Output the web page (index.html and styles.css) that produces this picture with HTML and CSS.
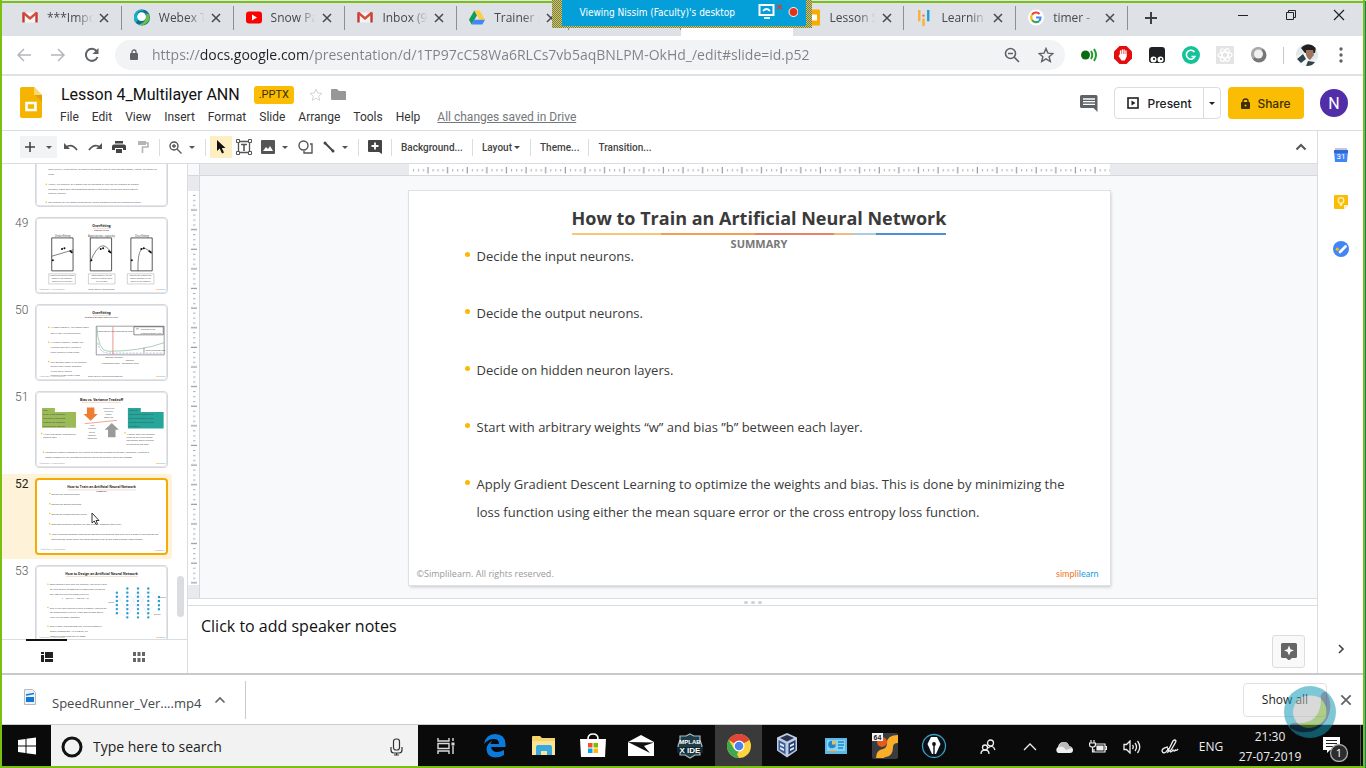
FILE: index.html
```html
<!DOCTYPE html>
<html lang="en">
<head>
<meta charset="utf-8">
<meta name="viewport" content="width=device-width, initial-scale=1">
<title>Lesson 4_Multilayer ANN</title>
<link rel="stylesheet" href="styles.css">
</head>
<body>
<svg class="defs" aria-hidden="true">
  <defs>
    <symbol id="x" viewBox="0 0 12 12"><path d="M2 2l8 8M10 2l-8 8" fill="none" stroke="currentColor" stroke-width="1.5"/></symbol>
    <symbol id="gmail" viewBox="0 0 16 12"><path d="M1 1h14v10H1z" fill="#f4f4f4"/><path d="M1.500 1v10M14.500 1v10" stroke="#c5392f" stroke-width="2.4"/><path d="M1 1l7 6 7-6" fill="none" stroke="#d54b3d" stroke-width="2.4"/></symbol>
    <symbol id="caret" viewBox="0 0 8 5"><path d="M1 1h6L4 4z" fill="currentColor"/></symbol>
    <symbol id="up" viewBox="0 0 12 8"><path d="M1.500 6.500L6 2l4.500 4.500" fill="none" stroke="currentColor" stroke-width="2"/></symbol>
    <pattern id="ticks-h" width="19.620" height="12" patternUnits="userSpaceOnUse"><path d="M4.500 5v2.500M9.500 5v2.500M14.500 5v2.500" stroke="#a9adb3"/><path d="M19 3v6.500" stroke="#9599a0" stroke-width="1.200"/></pattern>
    <pattern id="ticks-v" width="12" height="19.620" patternUnits="userSpaceOnUse"><path d="M5 4.500h2.500M5 9.500h2.500M5 14.500h2.500" stroke="#a9adb3"/><path d="M3 19h6" stroke="#9599a0" stroke-width="1.200"/></pattern>
    <g id="slide-foot"><text class="tf" x="18" y="384">©Simplilearn. All rights reserved.</text><text class="tl" x="640" y="386" fill="#ee7623">simpl</text><text class="tl" x="664" y="386" fill="#1b9dd9">learn</text></g>
  </defs>
</svg>

<div class="screen">
  <header class="tabstrip">
    <nav class="tabs" aria-label="Tabs">
      <div class="tab"><svg class="fav" viewBox="0 0 16 12"><use href="#gmail"/></svg><span>***Impo</span><button aria-label="Close tab"><svg><use href="#x"/></svg></button></div>
      <div class="tab"><svg class="fav" viewBox="0 0 18 18"><circle cx="9" cy="9" r="9" fill="#0b6f8f"/><path d="M9 0a9 9 0 0 0-7 15L5 11a5 5 0 0 1 7-8z" fill="#16b0c8"/><path d="M17 6a9 9 0 0 1-12 11c6-1 9-6 9-13z" fill="#6abf4b"/><circle cx="8.500" cy="8" r="5" fill="#fff"/></svg><span>Webex T</span><button aria-label="Close tab"><svg><use href="#x"/></svg></button></div>
      <div class="tab"><svg class="fav" viewBox="0 0 16 12"><rect width="16" height="12" rx="3" fill="#f00"/><path d="M6 3l5 3-5 3z" fill="#fff"/></svg><span>Snow Pa</span><button aria-label="Close tab"><svg><use href="#x"/></svg></button></div>
      <div class="tab"><svg class="fav" viewBox="0 0 16 12"><use href="#gmail"/></svg><span>Inbox (9</span><button aria-label="Close tab"><svg><use href="#x"/></svg></button></div>
      <div class="tab"><svg class="fav" viewBox="0 0 18 16"><path d="M6 0L0 10.500 3 16l6-10.500z" fill="#0f9d58"/><path d="M6 0h6l6 10.500h-6z" fill="#ffcd40"/><path d="M3 16h12l3-5.500H6z" fill="#4285f4"/></svg><span>Trainer I</span><button aria-label="Close tab"><svg><use href="#x"/></svg></button></div>
      <div class="tab"></div>
      <div class="tab active"></div>
      <div class="tab"><svg class="fav" viewBox="0 0 16 16"><rect x="1" width="14" height="16" rx="1" fill="#f9ab00"/><path d="M4 5h8v6H4z" fill="#fff"/></svg><span>Lesson S</span><button aria-label="Close tab"><svg><use href="#x"/></svg></button></div>
      <div class="tab"><svg class="fav" viewBox="0 0 16 18"><path d="M3 1v12M7.500 10v8" stroke="#fbb034" stroke-width="2.500"/><path d="M7.500 6v2" stroke="#ee7623" stroke-width="2.500"/><path d="M12.500 1v12" stroke="#1b9dd9" stroke-width="2.500"/></svg><span>Learnin</span><button aria-label="Close tab"><svg><use href="#x"/></svg></button></div>
      <div class="tab"><svg class="fav" viewBox="0 0 18 18"><circle cx="9" cy="9" r="9" fill="#fff"/><g fill="none" stroke-width="2.400"><path d="M13 5a5.500 5.500 0 0 0-8.500.8" stroke="#ea4335"/><path d="M4.500 5.800a5.500 5.500 0 0 0 0 6" stroke="#fbbc05"/><path d="M4.500 11.800a5.500 5.500 0 0 0 8 1.200" stroke="#34a853"/><path d="M12.500 13A5.500 5.500 0 0 0 14 9H9" stroke="#4285f4"/></g></svg><span>timer -</span><button aria-label="Close tab"><svg><use href="#x"/></svg></button></div>
    </nav>
    <button class="newtab" aria-label="New tab"><svg width="14" height="14"><path d="M7 1v12M1 7h12" stroke="#3c4043" stroke-width="2"/></svg></button>
    <div class="wincontrols">
      <button aria-label="Minimize"><svg width="12" height="12"><path d="M1 6.500h10" stroke="#222"/></svg></button>
      <button aria-label="Restore"><svg width="12" height="12"><path d="M1.500 3.500h7v7h-7zM3.500 3.500v-2h7v7h-2" fill="none" stroke="#222"/></svg></button>
      <button aria-label="Close"><svg width="12" height="12"><path d="M1 1l10 10M11 1L1 11" stroke="#222" stroke-width="1.200"/></svg></button>
    </div>
  </header>

  <div class="addressbar">
    <button class="ab" aria-label="Back"><svg width="16" height="14"><path d="M15 7H2M8 1L2 7l6 6" fill="none" stroke="#b4b7bb" stroke-width="1.500"/></svg></button>
    <button class="ab" aria-label="Forward"><svg width="16" height="14"><path d="M1 7h13M8 1l6 6-6 6" fill="none" stroke="#b4b7bb" stroke-width="1.500"/></svg></button>
    <button class="ab" aria-label="Reload"><svg width="16" height="16"><path d="M13.500 10A6 6 0 1 1 12.500 4" fill="none" stroke="#5f6368" stroke-width="2"/><path d="M14.500 1v6h-6z" fill="#5f6368"/></svg></button>
    <div class="omnibox">
      <svg width="10" height="14"><rect y="5" x="1" width="8" height="7" rx="1" fill="#5f6368"/><path d="M3 6V4a2 2 0 0 1 4 0v2" fill="none" stroke="#5f6368" stroke-width="1.300"/></svg>
      <input class="url" aria-label="Address" value="https://docs.google.com/presentation/d/1TP97cC58Wa6RLCs7vb5aqBNLPM-OkHd_/edit#slide=id.p52">
      <button class="ab" aria-label="Zoom out"><svg width="16" height="16"><circle cx="6.500" cy="6.500" r="5" fill="none" stroke="#5f6368" stroke-width="1.600"/><path d="M10 10l5 5M4 6.500h5" stroke="#5f6368" stroke-width="1.600"/></svg></button>
      <button class="ab" aria-label="Bookmark"><svg width="16" height="16"><path d="M8 1.500l1.900 4.600 5 .4-3.800 3.200 1.200 4.800L8 11.900l-4.300 2.600 1.200-4.800L1.100 6.500l5-.4z" fill="none" stroke="#5f6368" stroke-width="1.400"/></svg></button>
    </div>
    <button class="ab first-ext" aria-label="Sound extension"><svg width="18" height="16"><circle cx="5.500" cy="8" r="4.500" fill="#0b6b14"/><path d="M11 4q2.500 4 0 8M14 2q4 6 0 12" fill="none" stroke="#1e9b2b" stroke-width="2"/></svg></button>
    <button class="ab" aria-label="Ad blocker"><svg width="18" height="18"><path d="M5.500 0h7L18 5.500v7L12.500 18h-7L0 12.500v-7z" fill="#e40d0d"/><path d="M6.500 9V5M8.300 8V3.800M10.100 8V3.800M12 9V5" stroke="#fff" stroke-width="1.300" stroke-linecap="round"/><path d="M5.900 8h6.700v3l-1.800 3.500H7.500L4.500 10l.8-.7z" fill="#fff"/></svg></button>
    <button class="ab" aria-label="Panda extension"><svg width="16" height="17"><rect width="16" height="16" rx="3" fill="#202124"/><circle cx="4.500" cy="12.500" r="3" fill="#fff"/><circle cx="11.500" cy="12.500" r="3" fill="#fff"/><circle cx="5" cy="12" r="1"/><circle cx="12" cy="12" r="1"/></svg></button>
    <button class="ab" aria-label="Grammar extension"><svg width="18" height="18"><circle cx="9" cy="9" r="9" fill="#15c39a"/><path d="M12.500 6A4.500 4.500 0 1 0 13 10.500H9.500" fill="none" stroke="#fff" stroke-width="1.600"/></svg></button>
    <button class="ab" aria-label="React extension"><svg width="18" height="18"><path d="M0 0h18v18H0z" fill="#e4e4e4"/><g fill="none" stroke="#fff" stroke-width="1.200"><ellipse cx="9" cy="9" rx="7" ry="2.800"/><ellipse cx="9" cy="9" rx="7" ry="2.800" transform="rotate(60 9 9)"/><ellipse cx="9" cy="9" rx="7" ry="2.800" transform="rotate(120 9 9)"/></g></svg></button>
    <button class="ab" aria-label="Webex extension"><svg width="16" height="16"><circle cx="8" cy="8" r="7.500" fill="#777"/><path d="M2 12A7 7 0 0 1 12 2L9 5 4 10z" fill="#aaa"/><circle cx="7.500" cy="7" r="4.500" fill="#f1f1f1"/></svg></button>
    <span class="absep"></span>
    <button class="ab" aria-label="Profile"><svg width="22" height="22"><clipPath id="pc"><circle cx="11" cy="11" r="11"/></clipPath><g clip-path="url(#pc)"><path d="M0 0h22v22H0z" fill="#dfe8ea"/><path d="M5 4Q12-3 20 3l-1 6H9z" fill="#22201f"/><path d="M10 6h7l1 5-4 5-4-3z" fill="#a07361"/><path d="M0 12l9-3 4 8 7-2v7H3z" fill="#f4f6f7"/><path d="M1 15l6-5 3 5-5 4zM12 17l7 1-3 4h-6z" fill="#31444c"/></g></svg></button>
    <button class="ab" aria-label="Menu"><svg width="4" height="16" fill="#5f6368"><circle cx="2" cy="2" r="1.700"/><circle cx="2" cy="8" r="1.700"/><circle cx="2" cy="14" r="1.700"/></svg></button>
  </div>

  <header class="doc">
    <svg class="doclogo" width="22" height="32"><path d="M2 0h12l8 8v22a2 2 0 0 1-2 1H2a2 2 0 0 1-2-2V2a2 2 0 0 1 2-2z" fill="#f4b400"/><path d="M14 0l8 8h-8z" fill="#f9d775"/><path d="M22 8v7l-7-7z" fill="#dea203"/><path d="M6.500 16h9v7h-9z" fill="none" stroke="#fff" stroke-width="2.600"/></svg>
    <div class="docmain">
      <div class="titlerow">
        <h1>Lesson 4_Multilayer ANN</h1><span class="badge">.PPTX</span>
        <button aria-label="Star"><svg width="14" height="14"><path d="M7 1l1.700 4 4.300.4-3.300 2.800 1 4.200L7 10.200l-3.700 2.200 1-4.200L1 5.400 5.300 5z" fill="none" stroke="#d3d5d8"/></svg></button>
        <button aria-label="Move"><svg width="15" height="13"><path d="M1 1h5l2 2h6q1 0 1 1v8H1q-1 0-1-1V2q0-1 1-1z" fill="#959799"/></svg></button>
      </div>
      <nav class="menu">
        <button>File</button><button>Edit</button><button>View</button><button>Insert</button><button>Format</button><button>Slide</button><button>Arrange</button><button>Tools</button><button>Help</button>
        <a href="#">All changes saved in Drive</a>
      </nav>
    </div>
    <button class="comment" aria-label="Comments"><svg width="18" height="17"><path d="M1.500 0h14.500q1.500 0 1.500 1.500V17l-4-4H1.500Q0 13 0 11.500v-10Q0 0 1.500 0z" fill="#5f6368"/><path d="M3 4h12M3 6.700h12M3 9.400h12" stroke="#fff" stroke-width="1.300"/></svg></button>
    <div class="present">
      <button><svg width="12" height="12"><rect x="1" y="1" width="10" height="10" fill="none" stroke="#202124" stroke-width="1.600"/><path d="M4.500 3.500L8.500 6l-4 2.500z" fill="#202124"/></svg>Present</button>
      <button aria-label="Present options"><svg width="8" height="5"><use href="#caret"/></svg></button>
    </div>
    <button class="share"><svg width="9" height="11"><rect y="4" width="9" height="7" rx="1" fill="#3c2f00"/><path d="M2 5V3a2.500 2 0 0 1 5 0v2" fill="none" stroke="#3c2f00" stroke-width="1.400"/><circle cx="4.500" cy="7.500" r="1" fill="#fbbc04"/></svg>Share</button>
    <button class="avatar">N</button>
  </header>

  <div class="work">
    <div class="left">
      <div class="toolbar">
        <button class="tb add" aria-label="New slide"><svg width="10" height="10"><path d="M5 0v10M0 5h10" stroke="#444" stroke-width="1.600"/></svg><svg width="8" height="5"><use href="#caret"/></svg></button>
        <button class="tb" aria-label="Undo"><svg width="14" height="8"><path d="M2 4q6-4 11 3" fill="none" stroke="#555" stroke-width="1.700"/><path d="M0 0v6h6z" fill="#555"/></svg></button>
        <button class="tb" aria-label="Redo"><svg width="14" height="8"><path d="M12 4Q6 0 1 7" fill="none" stroke="#555" stroke-width="1.700"/><path d="M14 0v6H8z" fill="#555"/></svg></button>
        <button class="tb" aria-label="Print"><svg width="14" height="12"><path d="M3 0h8v2.500H3zM2 3.500h10q2 0 2 2V9h-3V7H3v2H0V5.500q0-2 2-2zM4 8h6v4H4z" fill="#444"/></svg></button>
        <button class="tb" aria-label="Paint format"><svg width="12" height="12"><path d="M1 0h8v4H1z" fill="#b5b5b5"/><path d="M9 2h2v4H5.500v6" fill="none" stroke="#b5b5b5" stroke-width="1.600"/></svg></button>
        <span class="sep"></span>
        <button class="tb wide" aria-label="Zoom"><svg width="13" height="13"><circle cx="5" cy="5" r="4" fill="none" stroke="#555" stroke-width="1.400"/><path d="M8 8l4.500 4.500M3 5h4M5 3v4" stroke="#555" stroke-width="1.300"/></svg><svg width="8" height="5"><use href="#caret"/></svg></button>
        <span class="sep"></span>
        <button class="tb on" aria-label="Select"><svg width="10" height="14"><path d="M1 0v11l2.700-2.500L6 13.500l2-1L5.800 8H9.500z" fill="#111"/></svg></button>
        <button class="tb" aria-label="Text box"><svg width="16" height="16" fill="none" stroke="#555"><path d="M2.500 2.500h11v11h-11z" stroke-width="1.300"/><path d="M.5.500h3v3h-3zM12.500.5h3v3h-3zM.5 12.500h3v3h-3zM12.500 12.500h3v3h-3z" fill="#fff"/><path d="M5 5.500h6M8 5.500V12" stroke-width="1.600"/></svg></button>
        <button class="tb wide" aria-label="Image"><svg width="14" height="14"><rect width="14" height="14" rx="1" fill="#555"/><path d="M2 11l3-4 2 2 2-3 3 5z" fill="#fff"/></svg><svg width="8" height="5"><use href="#caret"/></svg></button>
        <button class="tb" aria-label="Shape"><svg width="15" height="14" fill="none" stroke="#555" stroke-width="1.400"><circle cx="5.500" cy="5.500" r="4.500"/><path d="M12 4h2v9H6v-2"/></svg></button>
        <button class="tb wide" aria-label="Line"><svg width="12" height="12"><path d="M2 2l8 8" stroke="#444" stroke-width="2"/><circle cx="2" cy="2" r="1.500" fill="#444"/><circle cx="10" cy="10" r="1.500" fill="#444"/></svg><svg width="8" height="5"><use href="#caret"/></svg></button>
        <span class="sep"></span>
        <button class="tb" aria-label="Add comment"><svg width="14" height="14"><path d="M1 0h12q1 0 1 1v13l-3-2H1q-1 0-1-1V1q0-1 1-1z" fill="#444"/><path d="M7 2.500v7M3.500 6h7" stroke="#fff" stroke-width="1.800"/></svg></button>
        <span class="sep"></span>
        <button class="txt">Background...</button><span class="sep"></span>
        <button class="txt">Layout<svg width="8" height="5"><use href="#caret"/></svg></button><span class="sep"></span>
        <button class="txt">Theme...</button><span class="sep"></span>
        <button class="txt">Transition...</button>
        <button class="tb collapse" aria-label="Hide menus"><svg width="12" height="8"><use href="#up"/></svg></button>
      </div>

      <div class="editor">
        <aside class="film">
          <div class="strip">
            <ol>
              <li><span>48</span><svg class="thumb" viewBox="0 0 700 398"><g class="tb2"><text x="65" y="206">such as SVM, Naive Bayes, or logistic regression, due to their optimal model, tuning, or having an</text><text x="65" y="236">error.</text><text x="65" y="288">Hence, the capacity of a model can be changed by varying the number of hidden</text><text x="65" y="313">neurons, along with corresponding weights and biases. Deep nets often require</text><text x="65" y="336">require capacity.</text><text x="65" y="384">The capacity of the model depends on tuning parameters on the hypothesis space</text></g><path class="dots" d="M55 283v0M55 379v0"/></svg></li>
              <li><span>49</span><svg class="thumb" viewBox="0 0 700 398"><text class="tt" x="350" y="46">Overfitting</text><path class="rb" d="M305 54h92"/><text class="ts" x="350" y="68">UNDERFITTING</text><g class="th"><text x="142" y="100">Underfitting</text><text x="350" y="100">Appropriate capacity</text><text x="566" y="100">Overfitting</text></g><g fill="none" stroke="#222" stroke-width="4"><path d="M84 105h114v176H84zM290 105h114v176H290zM507 105h114v176H507z"/><path d="M84 203l114-34M290 232q60-145 114-42M545 281q-5-180 76-91" stroke-width="3"/></g><path d="M139 164v0M152 160v0M184 176v0M191 182v0M90 224v0M346 164v0M359 160v0M390 176v0M397 182v0M296 224v0M563 164v0M576 160v0M606 176v0M613 182v0M512 224v0" stroke="#111" stroke-width="11" stroke-linecap="round"/><g fill="none" stroke="#888" stroke-width="2"><path d="M68 297h142v54H68zM280 297h142v54H280zM488 297h142v54H488z"/></g><g class="tc"><text x="139" y="310">Underfitting occurs when</text><text x="139" y="327">model is not complex</text><text x="139" y="343">enough to fit the data</text><text x="351" y="310">Good capacity for the</text><text x="351" y="327">generalization of data</text><text x="351" y="343">as it fits well</text><text x="559" y="310">Overfitting is when the</text><text x="559" y="327">model memorizes the</text><text x="559" y="343">noise in the samples</text><text x="350" y="386">Image source: deeplearning</text></g><use href="#slide-foot"/></svg></li>
              <li><span>50</span><svg class="thumb" viewBox="0 0 700 398"><text class="tt" x="350" y="46">Overfitting</text><path class="rb" d="M305 54h92"/><text class="ts" x="350" y="68">GENERALIZATION AND CAPACITY</text><g class="tb2"><text x="78" y="124">At lower capacity, the model does</text><text x="78" y="152">not fit well to training data.</text><text x="78" y="204">At higher capacity, model fits</text><text x="78" y="229">training data well, having a</text><text x="78" y="254">large generalization error.</text><text x="78" y="306">The optimal point is the capacity</text><text x="78" y="331">where both under and over</text><text x="78" y="356">fitting meet, where</text><text x="78" y="377">generalization error is low.</text></g><path class="dots" d="M68 118v0M68 198v0M68 300v0"/><g fill="none" stroke-width="3"><path d="M322 112h363v153H322z" stroke="#555"/><path d="M411 114v150" stroke="#f08f8f" stroke-width="5"/><path d="M326 116q4 130 60 130 170 0 299-46" stroke="#6aa880"/><path d="M330 200q10 56 60 56h290" stroke="#8c8ad0" stroke-dasharray="12 6"/><path d="M523 115h157v43H523z" stroke="#333"/><path d="M577 228v25M535 126h14" stroke="#434b8c"/></g><g class="tb3"><text x="560" y="134">Training error</text><text x="560" y="152">Generalization error</text><text x="328" y="142">Underfitting zone Overfitting zone</text><text x="585" y="244">Generalization gap</text><text x="370" y="282">Optimal Capacity</text><text x="478" y="296">Capacity</text><text x="350" y="316">Underfitting zone</text><text x="460" y="316">Overfitting zone</text></g><text class="tc" x="370" y="386">Image source: deeplearningbook.org</text><use href="#slide-foot"/></svg></li>
              <li><span>51</span><svg class="thumb" viewBox="0 0 700 398"><text class="tt" x="350" y="46">Bias vs. Variance Tradeoff</text><path class="rb" d="M245 54h210"/><path d="M32 84h69v21h113v84H32z" fill="#9bbb59"/><path d="M491 84h69v21h122v89H491z" fill="#26a69a"/><path d="M272 82h40v34h18l-38 36-38-36h18z" fill="#ed7d31"/><path d="M385 240h40v-40h18l-38-36-38 36h18z" fill="#9a9a9a"/><path d="M260 168l173-18" stroke="#f0a08a" stroke-width="5"/><g class="tb3"><text x="38" y="100">Bias</text><text x="38" y="124">Error in assumptions</text><text x="38" y="144">resulting in algorithm</text><text x="38" y="164">missing the relations</text><text x="38" y="184">which cause underfit</text><text x="497" y="100">Variance</text><text x="497" y="124">Error from sensitivity to</text><text x="497" y="144">small fluctuations in the</text><text x="497" y="164">training set which cause</text><text x="497" y="184">overfitting</text><text x="38" y="226">A high bias model underfits the</text><text x="38" y="244">training data.</text><text x="484" y="226">A model with high variance</text><text x="484" y="244">tends to fit a high degree</text><text x="484" y="262">polynomial which is prone</text><text x="484" y="280">to overfit on the data</text><text x="50" y="326">Increasing a model's complexity will reduce its bias and increase its variance. Conversely, reducing a</text><text x="50" y="354">model's complexity will increase its bias and reduce its variance. This is the tradeoff.</text></g><g class="tc"><text x="388" y="88">Underfitted</text><text x="388" y="105">high bias</text><text x="388" y="122">simple</text><text x="388" y="139">modelling</text><text x="300" y="182">High</text><text x="300" y="199">variance</text><text x="300" y="216">overfit</text><text x="300" y="233">complex</text><text x="300" y="248">modelling</text></g><path class="dots" d="M30 221v0M476 217v0M40 320v0"/><use href="#slide-foot"/></svg></li>
              <li class="current"><span>52</span><svg class="thumb" viewBox="0 0 700 398"><text class="tt" x="350" y="46">How to Train an Artificial Neural Network</text><path class="rb" d="M168 54h368"/><text class="ts" x="350" y="68">SUMMARY</text><g class="tb2"><text x="76" y="80">Decide the input neurons.</text><text x="76" y="136">Decide the output neurons.</text><text x="76" y="190">Decide on hidden neuron layers.</text><text x="76" y="246">Start with arbitrary weights “w” and bias ”b” between each layer.</text><text x="76" y="302">Apply Gradient Descent Learning to optimize the weights and bias. This is done by minimizing the</text><text x="76" y="329">loss function using either the mean square error or the cross entropy loss function.</text></g><path class="dots" d="M68 73v0M68 129v0M68 183v0M68 239v0M68 295v0"/><use href="#slide-foot"/></svg>
                <svg class="pointer" width="10" height="14"><path d="M1 1v10l2.300-2L5 12.500l1.500-.7L5 8.500h3z" fill="#fff" stroke="#333"/></svg></li>
              <li><span>53</span><svg class="thumb" viewBox="0 0 700 398"><text class="tt" x="350" y="46">How to Design an Artificial Neural Network</text><path class="rb" d="M160 54h384"/><g class="tb2"><text x="73" y="102">Once weights and bias are defined, you have a way</text><text x="73" y="127">to train neural network with algorithms (between</text><text x="73" y="152">any two layers of neurons) such as</text><text x="137" y="177">y = f(w1*x1 + w2*x2 + b)</text><text x="73" y="226">This is the idea behind Neural Network, repeatedly</text><text x="73" y="251">for progressively better. More operations when</text><text x="73" y="274">train the network topology.</text><text x="73" y="326">This is how AlphaGo won Go, filtering people's</text><text x="73" y="354">image recognition. As is noted, an</text><text x="73" y="378">adaptive algorithm can be good.</text></g><path class="dots" d="M64 96v0M64 220v0M64 320v0"/><path d="M432 196L488 130 545 230 600 120 657 196M432 240L488 274 545 150 600 274 657 220M432 150l56 90 57-110 55 110 57-60" fill="none" stroke="#e6e6ee" stroke-width="3"/><path d="M432 141v112M488 119v156M545 119v156M600 119v156M657 164v68" stroke="#2b9fd0" stroke-width="13" stroke-linecap="round" stroke-dasharray="0 22"/><g class="tc"><text x="402" y="198">Inputs</text><text x="676" y="168">Output</text><text x="648" y="262">Output</text></g><use href="#slide-foot"/></svg></li>
            </ol>
            <i class="scrollthumb"></i>
          </div>
          <div class="viewtabs">
            <button class="sel" aria-label="Filmstrip view"><svg width="12" height="10"><path d="M0 0h3v2H0zM0 3h3v7H0zM4 0h8v6H4zM4 7h8v3H4z" fill="#222"/></svg></button>
            <button aria-label="Grid view"><svg width="12" height="10"><path d="M0 0h3v4H0zM4.500 0h3v4h-3zM9 0h3v4H9zM0 6h3v4H0zM4.500 6h3v4h-3zM9 6h3v4H9z" fill="#666"/></svg></button>
          </div>
        </aside>

        <main class="stage">
          <div class="hruler"><i></i><svg><rect width="100%" height="12" fill="url(#ticks-h)"/></svg></div>
          <div class="canvasrow">
            <div class="vruler"><svg><rect width="12" height="100%" fill="url(#ticks-v)"/></svg></div>
            <div class="canvas">
              <article class="slide">
                <h2>How to Train an Artificial Neural Network</h2>
                <p class="sub">SUMMARY</p>
                <ul>
                  <li>Decide the input neurons.</li>
                  <li>Decide the output neurons.</li>
                  <li>Decide on hidden neuron layers.</li>
                  <li>Start with arbitrary weights “w” and bias ”b” between each layer.</li>
                  <li>Apply Gradient Descent Learning to optimize the weights and bias. This is done by minimizing the loss function using either the mean square error or the cross entropy loss function.</li>
                </ul>
                <footer><span>©Simplilearn. All rights reserved.</span><span class="brand"><b>simpl</b><em>i</em>learn</span></footer>
              </article>
            </div>
          </div>
          <div class="splitter"><i></i><i></i><i></i></div>
          <div class="notes">
            <textarea aria-label="Speaker notes" placeholder="Click to add speaker notes"></textarea>
            <button class="explore" aria-label="Explore"><svg width="16" height="17"><path d="M1.500 0h13Q16 0 16 1.500v12q0 1.500-1.500 1.500H11l-3 2.500L5 15H1.500Q0 15 0 13.500v-12Q0 0 1.500 0z" fill="#666"/><path d="M8 2.500l1.500 3.700L13 7.500l-3.500 1.300L8 12.500 6.500 8.800 3 7.500l3.500-1.300z" fill="#fff"/></svg></button>
          </div>
        </main>
      </div>
    </div>

    <aside class="side">
      <button aria-label="Calendar"><svg width="14" height="14"><path d="M1 0h12v3H1z" fill="#c3c7d0"/><path d="M0 2h14l-1 12H1z" fill="#4285f4"/><path d="M0 2h14v3H0z" fill="#3367d6"/><text x="7" y="11" text-anchor="middle" font-size="8" font-family="Roboto" fill="#fff">31</text></svg></button>
      <button aria-label="Keep"><svg width="14" height="14"><path d="M1 0h12q1 0 1 1v9l-4 4H1q-1 0-1-1V1q0-1 1-1z" fill="#fbbc04"/><path d="M14 10h-4v4z" fill="#fff3c8"/><circle cx="7" cy="5.500" r="2.800" fill="none" stroke="#fff0b8" stroke-width="1.300"/><path d="M5.800 8.500h2.400v2.500H5.800z" fill="#fff0b8"/></svg></button>
      <button aria-label="Tasks"><svg width="16" height="16"><circle cx="8" cy="8" r="8" fill="#4285f4"/><path d="M7 11l5.500-5.500" stroke="#fff" stroke-width="2.800" stroke-linecap="round"/><circle cx="4.300" cy="8.200" r="1.600" fill="#fbbc04"/></svg></button>
      <button class="hide" aria-label="Hide side panel"><svg width="8" height="12"><path d="M2 2l4 4-4 4" fill="none" stroke="#444" stroke-width="1.600"/></svg></button>
    </aside>
  </div>

  <div class="downloads">
    <button class="file"><svg width="12" height="16"><path d="M.5.500h8l3 3v12H.5z" fill="#eef1f5" stroke="#b3bac2"/><path d="M2 8h8v5H2z" fill="#0f78d4"/><path d="M2 6l8-1.500" stroke="#0f78d4" stroke-width="1.500"/></svg><span>SpeedRunner_Ver....mp4</span></button>
    <button class="more" aria-label="Download options"><svg width="12" height="8"><path d="M1.500 6.500L6 2l4.500 4.500" fill="none" stroke="#5f6368" stroke-width="1.600"/></svg></button>
    <button class="showall">Show all</button>
    <button class="closebar" aria-label="Close downloads"><svg width="14" height="14"><use href="#x"/></svg></button>
  </div>

  <footer class="taskbar">
    <button class="start" aria-label="Start"><svg width="18" height="18"><path d="M0 3l7.500-1v6.500H0zM8.500 1.800L18 .5v8H8.500zM0 9.500h7.500V16L0 15zM8.500 9.500H18v8l-9.500-1.300z" fill="#fff"/></svg></button>
    <label class="search"><svg width="24" height="24"><circle cx="12" cy="12" r="9" fill="none" stroke="#111" stroke-width="3"/></svg><input placeholder="Type here to search" aria-label="Search"><svg width="13" height="18" fill="none" stroke="#333" stroke-width="1.200"><rect x="3.500" y="1" width="6" height="11" rx="2.500"/><path d="M1 9v3q0 3 3 3h5q3 0 3-3V9M6.500 15v2M4 17h5"/></svg></label>
    <div class="apps">
      <button aria-label="Task view"><svg width="18" height="18" fill="none" stroke="#ddd" stroke-width="1.400"><path d="M1 1v3h11V1M1 17v-3h11v3M1 6.500h11v5H1zM16 1v3M16 9v8"/><path d="M14.500 7h3" stroke-width="3"/></svg></button>
      <button aria-label="Edge"><svg width="22" height="24"><path d="M0 10Q2 0 11 0q10 0 10.500 10v3H7q1 5 6 5 4 0 7-2v5q-4 2.500-9 2.500-8-.5-8.500-8.500Q3 9 9 6.500 6.500 8 6.500 10H15q0-5-5-5-6 0-10 5z" fill="#0a7bdc"/></svg></button>
      <button aria-label="File Explorer"><svg width="24" height="20"><path d="M0 1q0-1 1-1h7l2 2h13v17H0z" fill="#f6d36b"/><path d="M0 5h23v14H0z" fill="#fbe494"/><path d="M4 19v-8q0-2 2-2h12q2 0 2 2v8h-5v-4H9v4z" fill="#38a9e0"/></svg></button>
      <button aria-label="Store"><svg width="26" height="25"><path d="M8 6q0-5 5-5t5 5" fill="none" stroke="#fff" stroke-width="1.600"/><path d="M0 6h26l-1 18H1z" fill="#fff"/><path d="M8 10h4.500v4.500H8z" fill="#f25022"/><path d="M13.500 10H18v4.500h-4.500z" fill="#7fba00"/><path d="M8 15.500h4.500V20H8z" fill="#00a4ef"/><path d="M13.500 15.500H18V20h-4.500z" fill="#ffb900"/></svg></button>
      <button aria-label="Mail"><svg width="26" height="22"><path d="M13 0l13 7v14H0V7z" fill="#fff"/><path d="M0 7l22 11-6-7 10-3.500z" fill="#111"/></svg></button>
      <button aria-label="MPLAB X IDE"><svg width="28" height="26"><path d="M14 1l4 2h6v4l2 6-2 6v3h-5l-5 3-5-3H4v-3l-2-6 2-6V3h6z" fill="#1e3c47" stroke="#a8bcc2" stroke-width="1.200"/><path d="M1 14h26v6H1z" fill="#0f2830"/><g font-family="Liberation Sans" font-weight="bold" fill="#fff" text-anchor="middle"><text x="14" y="11" font-size="6">MPLAB</text><text x="14" y="20" font-size="8">X IDE</text></g></svg></button>
      <button class="running" aria-label="Chrome"><svg width="24" height="24"><circle cx="12" cy="12" r="12" fill="#fdd23e"/><path d="M12 12L1.600 6A12 12 0 0 1 22.400 6z" fill="#e0453a"/><path d="M1.600 6L7 15l5 9A12 12 0 0 1 1.600 6z" fill="#3fa84f"/><path d="M7 15l5 2-4 6.500-4-6z" fill="#3fa84f"/><circle cx="12" cy="12" r="5.500" fill="#fff"/><circle cx="12" cy="12" r="4.300" fill="#4a83ee"/></svg></button>
      <button aria-label="VirtualBox"><svg width="22" height="25"><path d="M11 0l10 4.500v13L11 24.500 1 17.500v-13z" fill="#bfcbe0"/><path d="M11 2l7 3-7 3.500L4 5z" fill="#25344f"/><path d="M2.500 7l7 3.500v11l-7-4.500z" fill="#3c5f9b"/><path d="M19.500 7l-7 3.500v11l7-4.500z" fill="#22406f"/><path d="M4 10l4 2v2l-4-2zM4 14l4 2v2l-4-2zM18 10l-4 2v2l4-2zM18 14l-4 2v2l4-2z" fill="#e8eef8"/></svg></button>
      <button aria-label="Control Panel"><svg width="22" height="16"><path d="M0 0h22v16H0z" fill="#5ab9e8"/><path d="M2 2h18v11H2z" fill="#8bd3f5"/><circle cx="7" cy="6.500" r="3.800" fill="#2089cf"/><path d="M7 6.500V2.700a3.800 3.800 0 0 1 3.800 3.800z" fill="#f6c242"/><path d="M13 4h6M13 7h6M13 10h5" stroke="#2089cf" stroke-width="1.400"/><path d="M5 13.500h6" stroke="#f39a2b" stroke-width="1.500"/></svg></button>
      <button aria-label="Video player"><svg width="26" height="26"><rect width="26" height="26" rx="2" fill="#3a3b40"/><path d="M4 25q0-8 7-9 4-1 4-6 0-8 11-8v8q-5 0-5 4 0 9-7 10-2 0-2 1z" fill="#f9ad2a"/><circle cx="10" cy="9" r="5" fill="#e55b1b"/><path d="M0 0h11v8H0z" fill="#f4f4f4"/><text x="5.500" y="7" text-anchor="middle" font-size="7" font-weight="bold" font-family="Liberation Sans" fill="#222">64</text></svg></button>
      <button aria-label="Pen tool"><svg width="26" height="26"><circle cx="13" cy="13" r="11.500" fill="#081118" stroke="#3f9dc0" stroke-width="1.300"/><path d="M10 4h6l3.500 7-4.500 10h-4L6.500 11z" fill="#fff"/><path d="M13 12v10" stroke="#081118" stroke-width="1.400"/><circle cx="13" cy="11" r="1.900" fill="#081118"/></svg></button>
    </div>
    <div class="tray">
      <button class="people" aria-label="People"><svg width="16" height="16" fill="none" stroke="#eee" stroke-width="1.300"><circle cx="10.500" cy="4" r="3"/><circle cx="5" cy="8.500" r="2.500"/><path d="M1 15q0-4 4-4t4 4M8 9q5-4 7 2"/></svg></button>
      <button aria-label="Hidden icons"><svg width="14" height="8"><path d="M1 7l6-6 6 6" fill="none" stroke="#eee" stroke-width="1.300"/></svg></button>
      <button aria-label="OneDrive"><svg width="18" height="12"><path d="M3 12a3.500 3.500 0 0 1 0-6q1-5 6-5 4 0 5 4 4 1 4 4 0 3-3 3z" fill="#eee"/><path d="M4 6q4-2 7 3l6-2q-1-2-3-2-1-4-5-4-4 0-5 5z" fill="#b9b9b9"/></svg></button>
      <button aria-label="Battery"><svg width="18" height="14" fill="none" stroke="#eee" stroke-width="1.200"><path d="M6 4h10v8H5V9M16 6.500h1.500v3H16M2 0v3M5 0v3M.6 3h5.800v2q0 2-2.900 2T.6 5zM3.500 7v5H5"/><path d="M8 6h6v4H8z" fill="#eee"/></svg></button>
      <button aria-label="Volume"><svg width="18" height="14" fill="none" stroke="#eee" stroke-width="1.300"><path d="M1 4.500h2.500L7 1v12L3.500 9.500H1zM9.500 5q1.500 2 0 4M12 3q3 4 0 8M14.500 1q4.500 6 0 12"/></svg></button>
      <button class="pen" aria-label="Ink workspace"><svg width="18" height="16" fill="none" stroke="#eee" stroke-width="1.300"><path d="M8 10l4-8q2-2 3 0 0 1-5 9l-3 2zM7 8Q1 9 1 12q1 3 4 1 2-2 2-4M9 13q2 0 3-2 1 2 2.500 0 1 1 2.500-1"/></svg></button>
      <button class="lang">ENG</button>
      <button class="clock"><time>21:30</time><span>27-07-2019</span></button>
      <button class="note" aria-label="Notifications"><svg width="26" height="26"><path d="M0 1h17v13H7l-3 3v-3H0z" fill="#fff"/><path d="M3 4.500h11M3 7.500h11M3 10.500h8" stroke="#222"/><circle cx="16" cy="17" r="8.500" fill="#2c2c2e" stroke="#aaa" stroke-width="1.300"/><text x="16" y="21" text-anchor="middle" font-size="11" font-family="Open Sans" fill="#fff">1</text></svg></button>
    </div>
  </footer>

  <div class="banner"><p>Viewing Nissim (Faculty)'s desktop</p><svg width="40" height="18"><path d="M1.500 2h14v10h-14z" fill="none" stroke="#fff" stroke-width="2"/><path d="M5 8q3.500-4 7 0" fill="none" stroke="#fff" stroke-width="1.800"/><path d="M6 15h6" stroke="#fff" stroke-width="1.800"/><path d="M19 2l5 4M24 2l-5 4" stroke="#e2382c" stroke-width="1.600"/><circle cx="35.500" cy="9" r="4.500" fill="#e23218" stroke="#fff"/></svg></div>
  <svg class="orb" width="52" height="52"><g opacity=".55"><circle cx="26" cy="26" r="26" fill="#159ab8"/><path d="M42 6a26 26 0 0 1-36 36q-1-4 3-5Q34 38 37 9q2-4 5-3z" fill="#123f5e"/><path d="M36 12q9 8 6 19-4 9-16 11-8 0-13-5 20-2 23-25z" fill="#6ea62c"/><path d="M37 12q0 26-24 25Q6 28 11 18q8-13 26-6z" fill="#bbb"/></g></svg>
</div>
</body>
</html>
```
FILE: styles.css
```css
* { box-sizing: border-box; }

body {
  margin: 0;
  background: linear-gradient(#dfe3f2 1px, #0a7f86 1px);
  font-family: Roboto, "Liberation Sans", sans-serif;
  color: #202124;
}

button {
  margin: 0;
  padding: 0;
  border: 0;
  background: none;
  color: inherit;
  font: inherit;
  display: flex;
  align-items: center;
  justify-content: center;
}

input, textarea { border: 0; padding: 0; margin: 0; background: none; outline: 0; min-width: 0; }
h1, h2, p, ul, ol { margin: 0; padding: 0; }
ol, ul { list-style: none; }
svg { flex: none; display: block; }
.defs { position: absolute; width: 0; height: 0; }

.screen {
  position: relative;
  display: flex;
  flex-direction: column;
  min-height: 100vh;
  margin-right: 1px;
  border: 2px solid #7ac10f;
  border-top: 0;
  background: #fff;
}

/* Browser tabs */
.tabstrip { display: flex; height: 36px; background: linear-gradient(#dfe3f2 1px, #7ac10f 1px, #7ac10f 3px, #dee1e6 3px); padding: 3px 0 0 8px; }
.tabs { flex: 0 1 1118px; display: grid; grid-template-columns: repeat(10, minmax(0, 1fr)); }
.tab {
  display: flex;
  align-items: center;
  height: 29px;
  padding: 0 8px 0 12px;
  border-style: solid;
  border-width: 0 1px 0 0;
  border-image: linear-gradient(transparent 4px, #8b8e93 4px, #8b8e93 26px, transparent 26px) 1;
}
.fav { width: 16px; height: 17px; }
.tab span {
  flex: 1;
  margin-left: 9px;
  white-space: nowrap;
  font: 12px/29px "Open Sans", sans-serif;
  color: #45494d;
  -webkit-mask-image: linear-gradient(90deg, #000 60%, transparent 95%);
  mask-image: linear-gradient(90deg, #000 60%, transparent 95%);
}
.tab button { width: 18px; color: #45494d; }
.tab button svg { width: 12px; height: 12px; }
.tab.active { height: 33px; background: #fff; border: 0; border-radius: 8px 8px 0 0; }
.newtab { width: 46px; height: 29px; }
.wincontrols { display: flex; margin-left: auto; height: 24px; }
.wincontrols button { width: 48px; }

/* Address bar */
.addressbar { display: flex; align-items: center; height: 40px; padding: 0 5px; border-bottom: 2px solid #dfe1e5; }
.ab { flex: none; width: 34px; height: 30px; }
.omnibox { flex: 1; display: flex; align-items: center; height: 30px; margin-left: 6px; padding: 0 2px 0 14px; border-radius: 15px; background: #f1f3f4; }
.url {
  flex: 1;
  margin-left: 13px;
  font: 14px/28px "Open Sans", sans-serif;
  color: transparent;
  background: linear-gradient(90deg, #7b8188 47px, #202124 47px, #202124 157px, #7b8188 157px);
  -webkit-background-clip: text;
  background-clip: text;
}
.first-ext { margin-left: 7px; }
.absep { width: 1px; height: 17px; margin: 0 6px 0 7px; background: #c6c8cc; }

/* Document header */
.doc { display: flex; align-items: center; height: 55px; padding: 0 15px 0 18px; border-bottom: 1px solid #dadce0; }
.docmain { flex: 1; margin-left: 18px; padding-top: 5px; }
.titlerow { display: flex; align-items: center; height: 22px; padding-left: 1px; }
h1 { font: 16px/22px Roboto, sans-serif; color: #111; }
.badge { margin: 0 15px 0 14px; padding: 0 5px; border-radius: 3px; background: #fbbc04; font-size: 11px; line-height: 18px; color: #3b3000; }
.titlerow button { margin-right: 8px; }
.menu { display: flex; align-items: center; gap: 13px; height: 22px; font-size: 12px; color: #333; }
.menu a { margin-left: 4px; color: #74777b; }
.comment { margin-right: 16px; }
.present { display: flex; height: 32px; margin-right: 7px; border: 1px solid #dadce0; border-radius: 4px; font: 500 12px "Inter", sans-serif; color: #202124; }
.present button:first-child { width: 88px; gap: 9px; }
.present button:last-child { width: 17px; border-left: 1px solid #dadce0; }
.share { height: 32px; width: 76px; margin-right: 16px; gap: 7px; border-radius: 4px; background: #fbbc04; font: 500 12px "Inter", sans-serif; color: #3c2f00; }
.avatar { width: 28px; height: 28px; border-radius: 50%; background: #512da8; color: #fff; font-size: 16px; }

/* Workspace */
.work { flex: 1; display: flex; min-height: 0; border-bottom: 2px solid #c9c9c9; }
.left { flex: 1; display: flex; flex-direction: column; min-width: 0; }
.side { width: 46px; border-left: 1px solid #dadce0; display: flex; flex-direction: column; align-items: center; padding: 15px 0 16px; gap: 30px; }
.side button { width: 20px; height: 17px; }
.side .hide { margin-top: auto; }

.toolbar { display: flex; align-items: center; height: 33px; padding-left: 18px; border-bottom: 1px solid #dadce0; color: #555; }
.tb { width: 24px; height: 22px; }
.tb.add { width: 37px; margin-right: 2px; gap: 10px; background: #f1f3f4; }
.tb.wide { width: 37px; gap: 6px; }
.tb.on { width: 22px; background: #feefc3; }
.sep { width: 1px; height: 17px; margin: 0 4px; background: #dadce0; }
.txt { padding: 0 5px; gap: 1px; font-size: 10px; font-weight: 500; color: #444; }
.collapse { margin: 0 4px 0 auto; }

.editor { flex: 1; display: flex; min-height: 0; }
.film { width: 186px; display: flex; flex-direction: column; border-right: 1px solid #dadce0; }
.strip { position: relative; flex: 1 1 0; min-height: 0; overflow: hidden; }
.strip ol { display: flex; flex-direction: column; gap: 2px; margin-top: -38px; }
.strip li { position: relative; display: flex; width: 170px; height: 85px; padding: 4px; font-size: 12px; color: #555; }
.strip li span { width: 29px; padding-left: 9px; line-height: 13px; font-weight: 300; }
.strip li.current { background: #fef3d9; border-radius: 0 3px 3px 0; }
.strip li.current span { font-weight: 400; color: #222; }
.thumb { width: 133px; height: 77px; border: 1px solid #d5d7dc; border-radius: 4px; background: #fff; outline: 1px solid #e3e5e9; outline-offset: -2px; font-family: "Open Sans", sans-serif; }
.current .thumb { border: 2px solid #f4ab05; outline: 0; }
.pointer { position: absolute; left: 89px; top: 38px; }
.scrollthumb { position: absolute; right: 3px; bottom: 22px; width: 7px; height: 41px; border-radius: 4px; background: #dadce0; }
.viewtabs { display: flex; height: 34px; padding: 0 0 0 24px; gap: 51px; border-top: 1px solid #dadce0; }
.viewtabs button { width: 41px; border-top: 2px solid transparent; margin-top: -1px; }
.viewtabs .sel { border-top-color: #111; }

/* Miniature slide drawings */
.tt { font-size: 18px; font-weight: 700; text-anchor: middle; fill: #222; }
.ts { font-size: 11px; font-weight: 700; text-anchor: middle; fill: #555; }
.th { font-size: 15px; text-anchor: middle; fill: #444; }
.tc { font-size: 11px; text-anchor: middle; fill: #444; }
.tb2 { font-size: 13px; fill: #444; }
.tb3 { font-size: 12px; fill: #444; }
.tf { font-size: 9px; fill: #888; }
.tl { font-size: 11px; }
.dots { stroke: #fbbc04; stroke-width: 8px; stroke-linecap: round; }
.rb { stroke: #eeb9a6; stroke-width: 3px; }

/* Stage */
.stage { flex: 1; display: flex; flex-direction: column; min-width: 0; }
.hruler { display: flex; justify-content: center; height: 12px; padding-left: 13px; background: #e8eaed; border-bottom: 1px solid #d6d8dc; position: relative; }
.hruler i { position: absolute; left: 0; top: 0; width: 12px; height: 11px; background: #f8f9fa; border-right: 1px solid #d6d8dc; }
.hruler svg { flex: 0 1 701px; height: 11px; background: #fff; }
.canvasrow { flex: 1; display: flex; min-height: 0; }
.vruler { width: 12px; padding: 15px 0 13px; background: #e8eaed; border-right: 1px solid #d6d8dc; }
.vruler svg { width: 11px; height: 100%; background: #fff; }
.canvas { flex: 1; display: flex; justify-content: center; align-items: flex-start; min-width: 0; padding: 15px 0 0 1px; background: #f8f9fa; }
.slide {
  flex: 0 1 701px;
  display: flex;
  flex-direction: column;
  min-height: 394px;
  background: #fff;
  box-shadow: 0 0 0 1px #dfe0e2, 1px 2px 3px #c4c6c9;
  font-family: "Open Sans", sans-serif;
  color: #3a3a3a;
}
.slide h2 {
  align-self: center;
  margin-top: 15px;
  padding-bottom: 3px;
  font-size: 18px;
  line-height: 24px;
  font-weight: 700;
  border-bottom: 2px solid;
  border-image: linear-gradient(90deg, #f9c57a 0 24%, #f0a050 24% 49%, #e58466 49% 70%, #f0bb82 70% 75%, #a8cfe0 75% 81%, #4a90d6 81%) 1;
}
.sub { text-align: center; margin-top: 1px; font-size: 11px; line-height: 16px; font-weight: 700; color: #777; }
.slide ul { display: flex; flex-direction: column; gap: 29px; margin-top: -10px; padding: 0 34px 0 68px; font-size: 13px; line-height: 28px; }
.slide li { position: relative; }
.slide li::before { content: ""; position: absolute; left: -12px; top: 10px; width: 5px; height: 5px; border-radius: 50%; background: #fbb904; }
.slide footer { display: flex; justify-content: space-between; margin-top: auto; padding: 0 11px 3px 8px; font-size: 9px; line-height: 16px; color: #999; }
.brand { font-family: Lato, sans-serif; color: #1b9dd9; }
.brand b { font-weight: 400; color: #ee7623; }
.brand em { font-style: normal; color: #ee7623; }

.splitter { display: flex; align-items: center; justify-content: center; gap: 3px; height: 8px; border: 1px solid #dadce0; border-width: 1px 0; }
.splitter i { width: 4px; height: 3px; border-radius: 2px; background: #cfd1d4; }
.notes { display: flex; align-items: flex-end; height: 67px; padding: 0 12px 5px 13px; }
.notes textarea { flex: 1; align-self: stretch; resize: none; padding-top: 8px; font: 16px/24px "Open Sans", sans-serif; }
.notes textarea::placeholder { color: #111; opacity: 1; }
.explore { width: 33px; height: 33px; border: 1px solid #dadce0; border-radius: 3px; background: #f9f9f9; }

/* Downloads */
.downloads { display: flex; align-items: center; height: 50px; padding-right: 8px; border-bottom: 1px solid #ccc; font-family: "Open Sans", sans-serif; font-size: 13px; color: #45494d; }
.file { padding-left: 22px; gap: 16px; }
.file svg { margin-bottom: 6px; }
.file span { margin-top: 6px; }
.more { width: 45px; height: 38px; padding-right: 6px; margin-right: auto; border-right: 1px solid #c9cbce; }
.showall { width: 84px; height: 34px; margin-right: 10px; border: 1px solid #dfe1e5; border-radius: 4px; font-size: 12px; color: #222; }
.closebar { width: 18px; color: #5f6368; }

/* Taskbar */
.taskbar { display: flex; height: 41px; background: #0a0a0a; color: #eee; font-family: "Open Sans", sans-serif; font-size: 12px; }
.start { width: 49px; }
.search { flex: 0 1 367px; display: flex; align-items: center; padding: 2px 15px 0 9px; background: #f2f2f2; }
.search input { flex: 1; margin-left: 9px; font: 14px/24px "Open Sans", sans-serif; color: #222; }
.search input::placeholder { color: #222; opacity: 1; }
.apps { flex: 0 1 540px; display: grid; grid-template-columns: repeat(11, minmax(0, 1fr)); padding-left: 4px; }
.running { background: #3a3a3a; margin: 0 1px; }
.tray { display: flex; margin-left: auto; padding: 2px 1px 0 0; margin-right: 2px; border-right: 1px solid #555; }
.tray button { width: 34px; }
.tray .people { width: 50px; }
.tray .pen { width: 42px; }
.tray .lang { width: 40px; }
.tray .clock { width: 78px; flex-direction: column; line-height: 20px; }
.tray .note { width: 50px; padding: 5px 0 0 4px; }

/* Overlays */
.banner {
  position: absolute;
  top: 0;
  left: 50%;
  width: 260px;
  height: 28px;
  margin-left: -131px;
  padding: 0 6px 2px 10px;
  background: repeating-conic-gradient(#d8d020 0 25%, #70738c 0 50%) 0 0 / 2px 2px;
  display: flex;
}
.banner p { flex: 1; padding-left: 18px; background: #049fd9; color: #fff; font: 10px/26px "DejaVu Sans Condensed", "DejaVu Sans", sans-serif; white-space: nowrap; }
.banner svg { width: 50px; height: 26px; padding: 3px 8px 5px 2px; background: #049fd9; }
.orb { position: absolute; right: 27px; bottom: 28px; }
```
